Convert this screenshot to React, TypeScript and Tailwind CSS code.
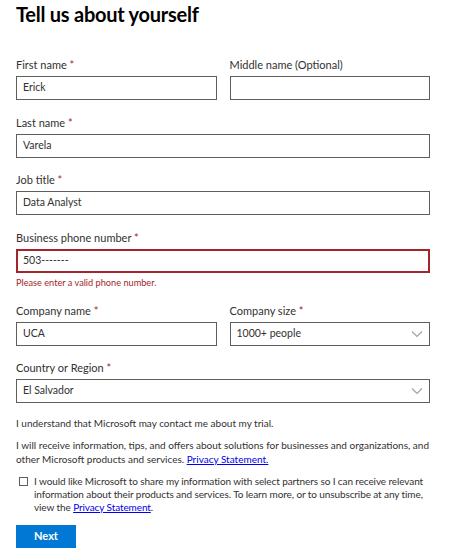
import React from "react";

const font = { fontFamily: 'Lato, "Open Sans", "Liberation Sans", sans-serif' };

function Label({ text, required }: { text: string; required?: boolean }) {
  return (
    <div className="mb-[3px] h-[16px] text-[11px] leading-[16px] text-[#323130]">
      {text}
      {required && <span className="text-[#a4262c]"> *</span>}
    </div>
  );
}

function Input({ value, error }: { value?: string; error?: boolean }) {
  return (
    <div
      className={
        error
          ? "flex h-[24px] items-center border-2 border-[#a4262c] px-[5px] text-[10.5px] text-[#323130]"
          : "flex h-[24px] items-center border border-[#605e5c] px-[6px] text-[10.5px] text-[#323130]"
      }
    >
      {value}
    </div>
  );
}

function Select({ value }: { value: string }) {
  return (
    <div className="flex h-[24px] items-center justify-between border border-[#605e5c] pl-[6px] pr-[6px] text-[10.5px] text-[#323130]">
      <span>{value}</span>
      <svg width="12" height="8" viewBox="0 0 12 8" fill="none">
        <path d="M1 1.5l5 5 5-5" stroke="#a19f9d" strokeWidth="1.1" />
      </svg>
    </div>
  );
}

export default function App() {
  return (
    <div className="w-[472px] bg-white px-4 pb-4" style={font}>
      <h1 className="text-[20px] font-bold leading-[28px] tracking-[-0.25px] text-black">Tell us about yourself</h1>

      <div className="mt-[29px] w-[414px]">
        <div className="grid grid-cols-2 gap-x-[13px]">
          <div>
            <Label text="First name" required />
            <Input value="Erick" />
          </div>
          <div>
            <Label text="Middle name (Optional)" />
            <Input />
          </div>
        </div>

        <div className="mt-[15px]">
          <Label text="Last name" required />
          <Input value="Varela" />
        </div>

        <div className="mt-[14px]">
          <Label text="Job title" required />
          <Input value="Data Analyst" />
        </div>

        <div className="mt-[15px]">
          <Label text="Business phone number" required />
          <Input value="503-------" error />
          <div className="mt-[4px] text-[9.2px] leading-[12px] text-[#a4262c]">Please enter a valid phone number.</div>
        </div>

        <div className="mt-[14px] grid grid-cols-2 gap-x-[13px]">
          <div>
            <Label text="Company name" required />
            <Input value="UCA" />
          </div>
          <div>
            <Label text="Company size" required />
            <Select value="1000+ people" />
          </div>
        </div>

        <div className="mt-[14px]">
          <Label text="Country or Region" required />
          <Select value="El Salvador" />
        </div>

        <p className="mt-[14px] text-[10px] leading-[13px] text-[#323130]">
          I understand that Microsoft may contact me about my trial.
        </p>
        <p className="mt-[8px] whitespace-nowrap text-[10px] leading-[14px] text-[#323130]">
          I will receive information, tips, and offers about solutions for businesses and organizations, and
          <br />
          other Microsoft products and services.{" "}
          <a href="#" className="text-[#0000ee] underline">
            Privacy Statement.
          </a>
        </p>

        <div className="mt-[9px] flex items-start gap-[6px] pl-[3px]">
          <div className="mt-[2px] h-[9px] w-[9px] shrink-0 border border-[#605e5c] bg-white" />
          <p className="whitespace-nowrap text-[10px] leading-[13px] tracking-[-0.1px] text-[#323130]">
            I would like Microsoft to share my information with select partners so I can receive relevant
            <br />
            information about their products and services. To learn more, or to unsubscribe at any time,
            <br />
            view the{" "}
            <a href="#" className="text-[#0000ee] underline">
              Privacy Statement
            </a>
            .
          </p>
        </div>

        <button
          type="button"
          className="mt-[11px] flex h-[23px] w-[60px] items-center justify-center bg-[#0078d4] text-[11px] font-bold text-white"
        >
          Next
        </button>
      </div>
    </div>
  );
}
